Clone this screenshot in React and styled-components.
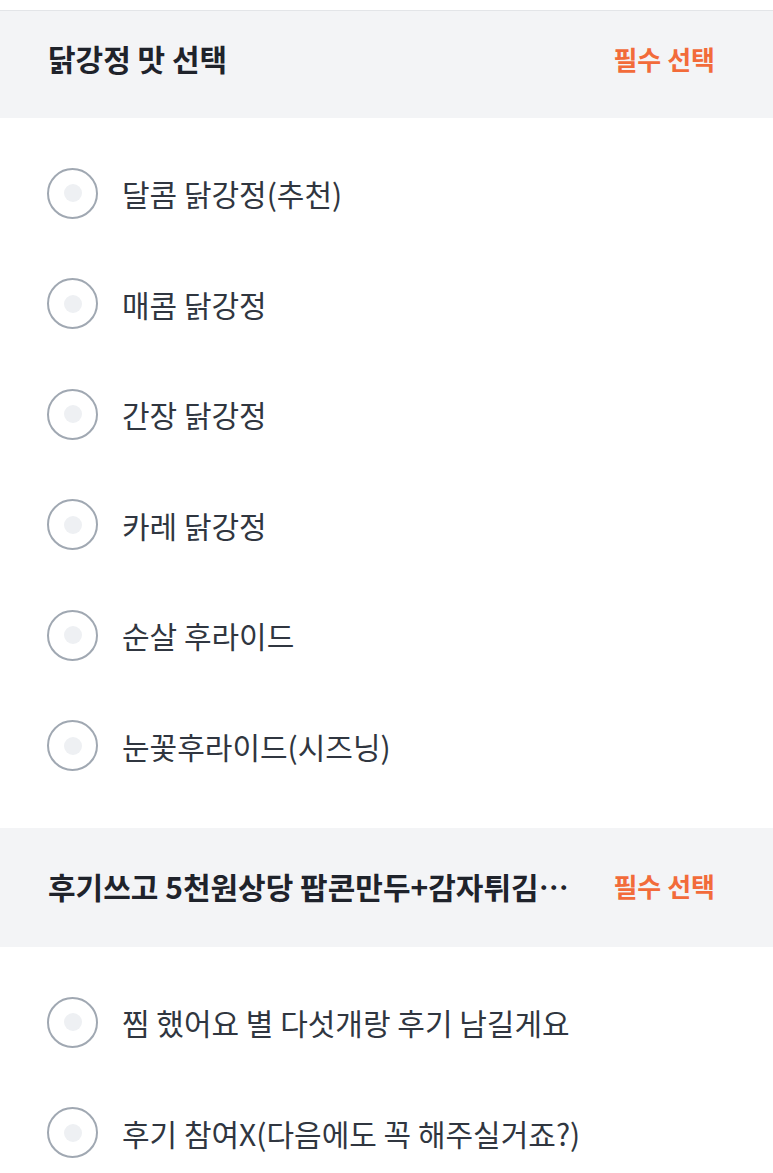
import React from 'react';
import styled, { createGlobalStyle } from 'styled-components';

const GlobalStyle = createGlobalStyle`
  body {
    margin: 0;
    background: #ffffff;
    font-family: "Noto Sans CJK KR", "Noto Sans", sans-serif;
    -webkit-font-smoothing: antialiased;
  }
`;

const groups = [
  {
    title: '닭강정 맛 선택',
    first: true,
    options: [
      '달콤 닭강정(추천)',
      '매콤 닭강정',
      '간장 닭강정',
      '카레 닭강정',
      '순살 후라이드',
      '눈꽃후라이드(시즈닝)',
    ],
  },
  {
    title: '후기쓰고 5천원상당 팝콘만두+감자튀김 이벤트 참여',
    options: ['찜 했어요 별 다섯개랑 후기 남길게요', '후기 참여X(다음에도 꼭 해주실거죠?)'],
  },
];

export default function App() {
  return (
    <Page>
      <GlobalStyle />
      <TopLine />
      {groups.map((group) => (
        <section key={group.title}>
          <GroupHeader $first={group.first}>
            <Title>{group.title}</Title>
            <Required>필수 선택</Required>
          </GroupHeader>
          <OptionList>
            {group.options.map((label) => (
              <OptionRow key={label}>
                <Radio>
                  <RadioDot />
                </Radio>
                <OptionLabel>{label}</OptionLabel>
              </OptionRow>
            ))}
          </OptionList>
        </section>
      ))}
    </Page>
  );
}

const Page = styled.main`
  width: 773px;
  padding-top: 10px;
  background: #ffffff;
`;

const TopLine = styled.div`
  height: 1px;
  background: #e3e5e8;
`;

const GroupHeader = styled.div`
  display: flex;
  align-items: center;
  gap: 42px;
  box-sizing: border-box;
  height: ${({ $first }) => ($first ? '107px' : '119px')};
  padding: ${({ $first }) => ($first ? '0 58px 13px 48px' : '0 58px 4px 48px')};
  background: #f3f4f6;
`;

const Title = styled.h2`
  flex: 1;
  min-width: 0;
  margin: 0;
  font-size: 30px;
  font-weight: 700;
  color: #1f232b;
  white-space: nowrap;
  overflow: hidden;
  text-overflow: ellipsis;
`;

const Required = styled.span`
  flex-shrink: 0;
  font-size: 26px;
  font-weight: 700;
  color: #f26b3a;
`;

const OptionList = styled.ul`
  list-style: none;
  margin: 0;
  padding: 20px 0 27px;
`;

const OptionRow = styled.li`
  display: flex;
  align-items: center;
  gap: 24px;
  height: 110.5px;
  padding-left: 47px;
`;

const Radio = styled.span`
  display: flex;
  align-items: center;
  justify-content: center;
  box-sizing: border-box;
  width: 51px;
  height: 51px;
  border: 2px solid #a0a8b2;
  border-radius: 50%;
  background: #ffffff;
`;

const RadioDot = styled.span`
  width: 18px;
  height: 18px;
  border-radius: 50%;
  background: #eef0f3;
`;

const OptionLabel = styled.span`
  font-size: 30px;
  color: #303640;
`;
